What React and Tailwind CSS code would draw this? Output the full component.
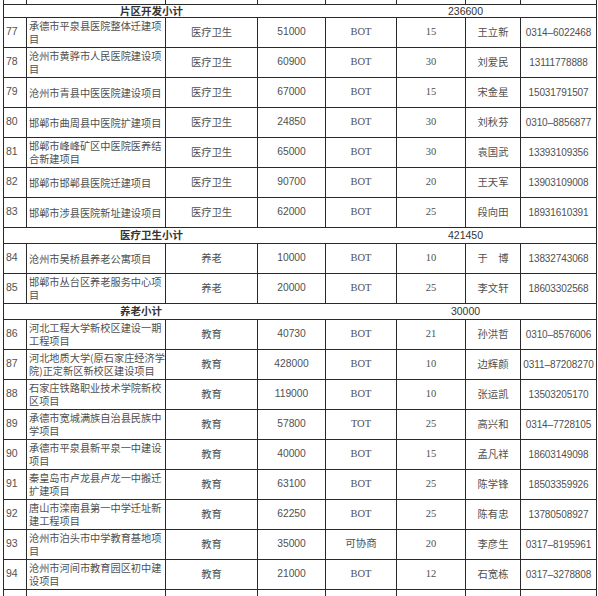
import React from "react";

// 项目列表（片区开发 / 医疗卫生 / 养老 / 教育）
const rows = [
  { sub: "片区开发小计", total: "236600", h: "h-[13px]" },
  { no: 77, name: "承德市平泉县医院整体迁建项目", type: "医疗卫生", amount: "51000", mode: "BOT", years: "15", contact: "王立新", phone: "0314–6022468" },
  { no: 78, name: "沧州市黄骅市人民医院建设项目", type: "医疗卫生", amount: "60900", mode: "BOT", years: "30", contact: "刘爱民", phone: "13111778888" },
  { no: 79, name: "沧州市青县中医医院建设项目", type: "医疗卫生", amount: "67000", mode: "BOT", years: "15", contact: "宋金星", phone: "15031791507" },
  { no: 80, name: "邯郸市曲周县中医院扩建项目", type: "医疗卫生", amount: "24850", mode: "BOT", years: "30", contact: "刘秋芬", phone: "0310–8856877" },
  { no: 81, name: "邯郸市峰峰矿区中医院医养结合新建项目", type: "医疗卫生", amount: "65000", mode: "BOT", years: "30", contact: "袁国武", phone: "13393109356" },
  { no: 82, name: "邯郸市邯郸县医院迁建项目", type: "医疗卫生", amount: "90700", mode: "BOT", years: "20", contact: "王天军", phone: "13903109008" },
  { no: 83, name: "邯郸市涉县医院新址建设项目", type: "医疗卫生", amount: "62000", mode: "BOT", years: "25", contact: "段向田", phone: "18931610391" },
  { sub: "医疗卫生小计", total: "421450", h: "h-[16px]" },
  { no: 84, name: "沧州市吴桥县养老公寓项目", type: "养老", amount: "10000", mode: "BOT", years: "10", contact: "于　博", phone: "13832743068" },
  { no: 85, name: "邯郸市丛台区养老服务中心项目", type: "养老", amount: "20000", mode: "BOT", years: "25", contact: "李文轩", phone: "18603302568" },
  { sub: "养老小计", total: "30000", h: "h-[16px]" },
  { no: 86, name: "河北工程大学新校区建设一期工程项目", type: "教育", amount: "40730", mode: "BOT", years: "21", contact: "孙洪哲", phone: "0310–8576006" },
  { no: 87, name: "河北地质大学(原石家庄经济学院)正定新区新校区建设项目", type: "教育", amount: "428000", mode: "BOT", years: "10", contact: "边辉颜", phone: "0311–87208270" },
  { no: 88, name: "石家庄铁路职业技术学院新校区项目", type: "教育", amount: "119000", mode: "BOT", years: "10", contact: "张运凯", phone: "13503205170" },
  { no: 89, name: "承德市宽城满族自治县民族中学项目", type: "教育", amount: "57800", mode: "TOT", years: "25", contact: "高兴和", phone: "0314–7728105" },
  { no: 90, name: "承德市平泉县新平泉一中建设项目", type: "教育", amount: "40000", mode: "BOT", years: "15", contact: "孟凡祥", phone: "18603149098" },
  { no: 91, name: "秦皇岛市卢龙县卢龙一中搬迁扩建项目", type: "教育", amount: "63100", mode: "BOT", years: "25", contact: "陈学锋", phone: "18503359926" },
  { no: 92, name: "唐山市滦南县第一中学迁址新建工程项目", type: "教育", amount: "62250", mode: "BOT", years: "25", contact: "陈有忠", phone: "13780508927" },
  { no: 93, name: "沧州市泊头市中学教育基地项目", type: "教育", amount: "35000", mode: "可协商", years: "20", contact: "李彦生", phone: "0317–8195961" },
  { no: 94, name: "沧州市河间市教育园区初中建设项目", type: "教育", amount: "21000", mode: "BOT", years: "12", contact: "石宽栋", phone: "0317–3278808" },
];

const cjk = "font-['Noto_Sans_CJK_SC',sans-serif]";
const sans = "font-['Liberation_Sans','Noto_Sans_CJK_SC',sans-serif]";
const serif = "font-['Liberation_Serif','Noto_Sans_CJK_SC',serif]";
const cell = "border border-[#2a2a2a] p-0 align-middle text-[#505050]";

function App() {
  return (
    <div className="w-[598px] h-[596px] overflow-hidden bg-white">
      <table className="ml-[3px] w-[593px] table-fixed border-collapse">
        <colgroup>
          <col className="w-[23px]" />
          <col className="w-[139px]" />
          <col className="w-[92px]" />
          <col className="w-[68px]" />
          <col className="w-[71px]" />
          <col className="w-[69px]" />
          <col className="w-[55px]" />
          <col className="w-[76px]" />
        </colgroup>
        <tbody>
          {/* 上一行的残留部分 */}
          <tr className="h-[4px]">
            {Array.from({ length: 8 }).map((_, i) => (
              <td key={i} className="border border-t-0 border-[#2a2a2a] p-0"></td>
            ))}
          </tr>

          {rows.map((r, i) =>
            r.sub ? (
              <tr key={i} className={r.h}>
                <td colSpan={8} className={cell}>
                  <div className="flex items-center leading-[12px]">
                    <div className={`w-[331px] pl-[116px] text-[10.5px] font-bold text-[#333] ${cjk}`}>
                      {r.sub}
                    </div>
                    <div className={`flex-1 text-center text-[10.5px] text-[#333] ${sans}`}>
                      {r.total}
                    </div>
                  </div>
                </td>
              </tr>
            ) : (
              <tr key={i} className="h-[30px]">
                <td className={`${cell} pl-[2px] text-[10.5px] ${sans}`}>{r.no}</td>
                <td className={`${cell} pl-[2px] text-[10.2px] leading-[13px] ${cjk}`}>{r.name}</td>
                <td className={`${cell} text-center text-[10.3px] ${cjk}`}>{r.type}</td>
                <td className={`${cell} text-center text-[10.3px] ${sans}`}>{r.amount}</td>
                <td className={`${cell} text-center text-[10.5px] ${serif}`}>{r.mode}</td>
                <td className={`${cell} text-center text-[10.5px] ${serif}`}>{r.years}</td>
                <td className={`${cell} text-center text-[10.3px] ${cjk}`}>{r.contact}</td>
                <td className={`${cell} text-center text-[10px] tracking-[-0.1px] ${sans}`}>{r.phone}</td>
              </tr>
            )
          )}

          {/* 下一行（被截断） */}
          <tr className="h-[30px]">
            {Array.from({ length: 8 }).map((_, i) => (
              <td key={i} className="border border-[#2a2a2a] p-0"></td>
            ))}
          </tr>
        </tbody>
      </table>
    </div>
  );
}

export default App;
